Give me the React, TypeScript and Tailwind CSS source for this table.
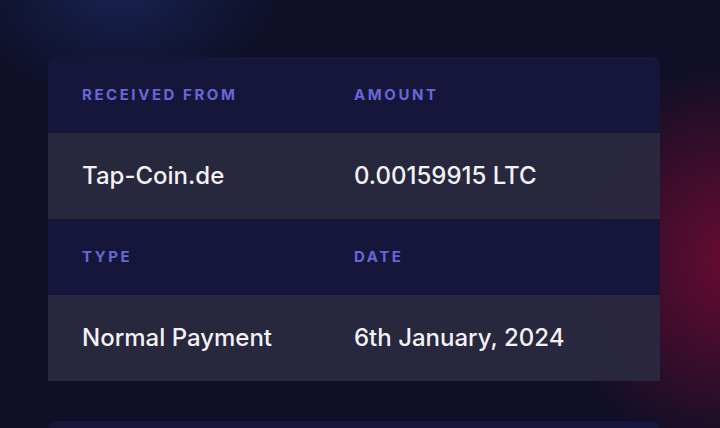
import React from "react";

const Label = ({ children }: { children: React.ReactNode }) => (
  <div className="text-[15px] font-bold tracking-[0.17em] text-[#6767d9] uppercase">{children}</div>
);
const Value = ({ children }: { children: React.ReactNode }) => (
  <div className="text-[24px] font-medium text-[#f2f2f5]">{children}</div>
);

export default function App() {
  return (
    <div
      className="relative w-[720px] h-[428px] overflow-hidden bg-[#0f0f27]"
      style={{ fontFamily: "Inter, 'Noto Sans', sans-serif" }}
    >
      <div className="absolute -left-[40px] -top-[120px] w-[320px] h-[220px] rounded-full bg-[radial-gradient(closest-side,rgba(30,50,110,0.55),rgba(30,50,110,0))]" />
      <div className="absolute left-[540px] top-[60px] w-[400px] h-[400px] rounded-full bg-[radial-gradient(closest-side,rgba(130,10,50,0.8),rgba(130,10,50,0))]" />
      <div className="relative flex flex-col pl-[48px] pt-[57px]">
        <div className="w-[612px] rounded-t-[8px] overflow-hidden">
          <div className="grid grid-cols-2 h-[76px] items-center px-[34px] bg-[#16163b]">
            <Label>Received From</Label>
            <Label>Amount</Label>
          </div>
          <div className="grid grid-cols-2 h-[86px] items-center px-[34px] bg-[rgba(42,42,64,0.9)]">
            <Value>Tap-Coin.de</Value>
            <Value>0.00159915 LTC</Value>
          </div>
          <div className="grid grid-cols-2 h-[76px] items-center px-[34px] bg-[#16163b]">
            <Label>Type</Label>
            <Label>Date</Label>
          </div>
          <div className="grid grid-cols-2 h-[86px] items-center px-[34px] bg-[rgba(42,42,64,0.9)]">
            <Value>Normal Payment</Value>
            <Value>6th January, 2024</Value>
          </div>
        </div>
        <div className="mt-[40px] w-[612px] h-[40px] rounded-t-[8px] bg-[#15163a]" />
      </div>
    </div>
  );
}
